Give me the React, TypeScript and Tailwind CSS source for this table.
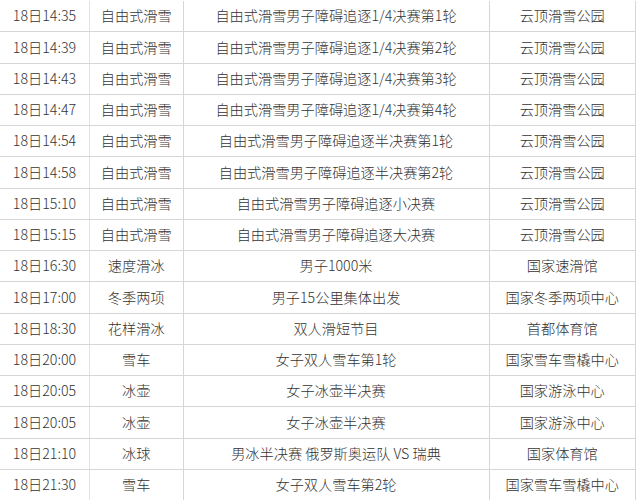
const rows: [string, string, string, string][] = [
  ['18日14:35', '自由式滑雪', '自由式滑雪男子障碍追逐1/4决赛第1轮', '云顶滑雪公园'],
  ['18日14:39', '自由式滑雪', '自由式滑雪男子障碍追逐1/4决赛第2轮', '云顶滑雪公园'],
  ['18日14:43', '自由式滑雪', '自由式滑雪男子障碍追逐1/4决赛第3轮', '云顶滑雪公园'],
  ['18日14:47', '自由式滑雪', '自由式滑雪男子障碍追逐1/4决赛第4轮', '云顶滑雪公园'],
  ['18日14:54', '自由式滑雪', '自由式滑雪男子障碍追逐半决赛第1轮', '云顶滑雪公园'],
  ['18日14:58', '自由式滑雪', '自由式滑雪男子障碍追逐半决赛第2轮', '云顶滑雪公园'],
  ['18日15:10', '自由式滑雪', '自由式滑雪男子障碍追逐小决赛', '云顶滑雪公园'],
  ['18日15:15', '自由式滑雪', '自由式滑雪男子障碍追逐大决赛', '云顶滑雪公园'],
  ['18日16:30', '速度滑冰', '男子1000米', '国家速滑馆'],
  ['18日17:00', '冬季两项', '男子15公里集体出发', '国家冬季两项中心'],
  ['18日18:30', '花样滑冰', '双人滑短节目', '首都体育馆'],
  ['18日20:00', '雪车', '女子双人雪车第1轮', '国家雪车雪橇中心'],
  ['18日20:05', '冰壶', '女子冰壶半决赛', '国家游泳中心'],
  ['18日20:05', '冰壶', '女子冰壶半决赛', '国家游泳中心'],
  ['18日21:10', '冰球', '男冰半决赛 俄罗斯奥运队 VS 瑞典', '国家体育馆'],
  ['18日21:30', '雪车', '女子双人雪车第2轮', '国家雪车雪橇中心'],
];

export default function App() {
  return (
    <div
      className="w-[637px] h-[500px] overflow-hidden bg-white pt-[1px] text-[14.2px] font-light text-[#333]"
      style={{ fontFamily: '"Noto Sans CJK SC", "Liberation Sans", sans-serif' }}
    >
      <div className="w-[636px] border-r border-[#d6d6d6]">
        {rows.map((r, i) => (
          <div
            key={i}
            className="grid grid-cols-[90px_93.5px_306px_145.5px] h-[31.25px] border-b border-[#d6d6d6]"
          >
            <div className="flex items-center justify-center border-r border-[#e2e2e2]">{r[0]}</div>
            <div className="flex items-center justify-center border-r border-[#d6d6d6]">{r[1]}</div>
            <div className="flex items-center justify-center border-r border-[#d6d6d6]">{r[2]}</div>
            <div className="flex items-center justify-center">{r[3]}</div>
          </div>
        ))}
      </div>
    </div>
  );
}
